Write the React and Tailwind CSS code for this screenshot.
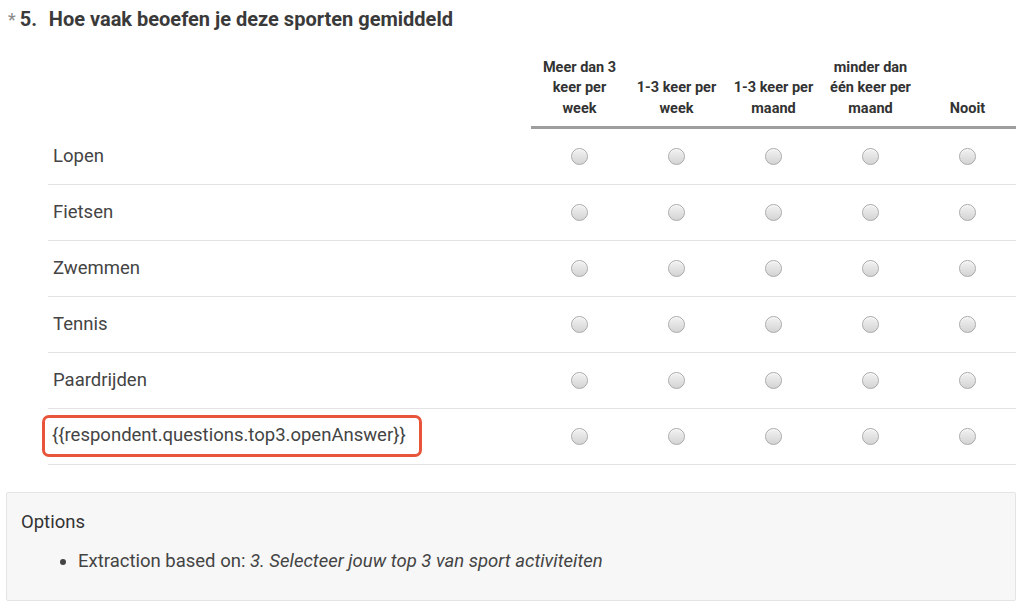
import React from "react";

const columns = [
  ["Meer dan 3", "keer per", "week"],
  ["1-3 keer per", "week"],
  ["1-3 keer per", "maand"],
  ["minder dan", "één keer per", "maand"],
  ["Nooit"],
];

const rows = ["Lopen", "Fietsen", "Zwemmen", "Tennis", "Paardrijden"];

function Radio() {
  return (
    <span className="block w-[17px] h-[17px] rounded-full border border-[#a9a9a9] bg-gradient-to-b from-[#f2f2f2] to-[#d4d4d4] shadow-[inset_0_1px_1px_rgba(255,255,255,0.8)]" />
  );
}

function Row({ children }) {
  return (
    <div className="flex items-center h-[56px] border-b border-[#e3e3e3]">
      <div className="w-[484px] pl-[5px] flex items-center">{children}</div>
      {columns.map((_, i) => (
        <div key={i} className="w-[97px] flex justify-center">
          <Radio />
        </div>
      ))}
    </div>
  );
}

export default function App() {
  return (
    <div className="w-[1024px] h-[609px] bg-white overflow-hidden font-['Roboto',sans-serif] text-[#333]">
      {/* Question title */}
      <div className="flex items-baseline pt-[6px] pl-[8px] text-[20px] leading-[26px]">
        <span className="text-[#8a8a8a] mr-[4px] text-[18px]">*</span>
        <span className="font-bold text-[#3a3a3a] w-[29px]">5.</span>
        <span className="font-bold text-[#3a3a3a]">Hoe vaak beoefen je deze sporten gemiddeld</span>
      </div>

      {/* Matrix */}
      <div className="ml-[48px] w-[968px] mt-[24px]">
        <div className="flex">
          <div className="w-[484px]" />
          <div className="flex border-b-[3px] border-[#9e9e9e] pb-[7px]">
            {columns.map((lines, i) => (
              <div
                key={i}
                className="w-[97px] h-[62px] flex flex-col justify-end items-center text-[14.5px] leading-[20.5px] font-bold text-[#333] whitespace-nowrap"
              >
                {lines.map((l, j) => (
                  <span key={j}>{l}</span>
                ))}
              </div>
            ))}
          </div>
        </div>
        {rows.map((r) => (
          <Row key={r}>
            <span className="text-[18.5px] text-[#444]">{r}</span>
          </Row>
        ))}
        <Row>
          <span className="-ml-[11px] mt-[-1px] px-[7px] h-[42px] w-[380px] flex items-center rounded-[7px] border-[3px] border-[#e8553a] text-[18.5px] text-[#444] whitespace-nowrap">
            {"{{respondent.questions.top3.openAnswer}}"}
          </span>
        </Row>
      </div>

      {/* Options */}
      <div className="ml-[6px] mt-[27px] w-[1010px] h-[109px] bg-[#f7f7f7] border border-[#e4e4e4] rounded-[2px] px-[14px] pt-[16px]">
        <div className="text-[18.5px] text-[#333] leading-[26px]">Options</div>
        <ul className="list-disc pl-[57px] mt-[13px] text-[18.5px] text-[#444] leading-[26px]">
          <li>
            Extraction based on: <em>3. Selecteer jouw top 3 van sport activiteiten</em>
          </li>
        </ul>
      </div>
    </div>
  );
}
